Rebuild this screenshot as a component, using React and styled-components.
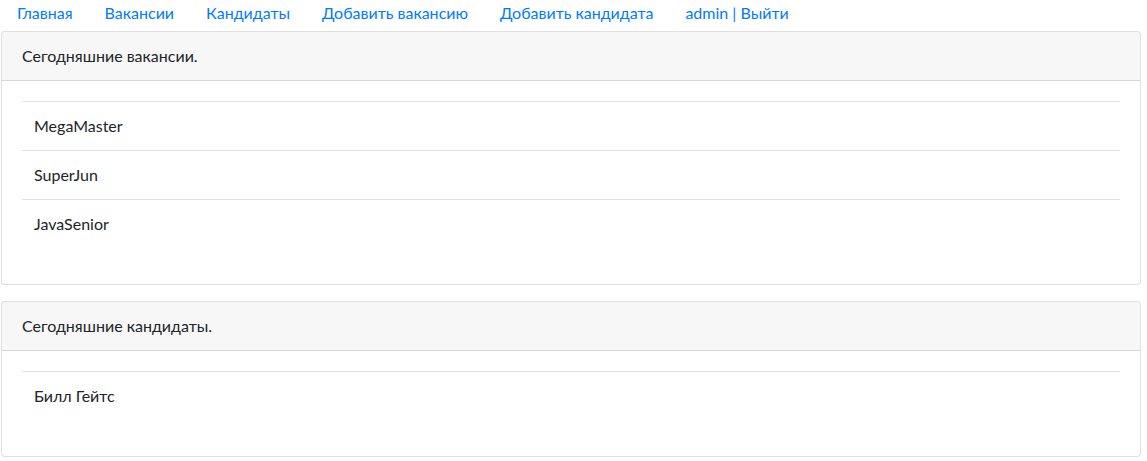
import React from "react";
import styled, { createGlobalStyle } from "styled-components";

const Global = createGlobalStyle`
  * { box-sizing: border-box; }
  body {
    margin: 0;
    background: #fff;
    font-family: Lato, "Noto Sans", sans-serif;
    font-size: 16px;
    line-height: 24px;
    color: #212529;
  }
`;

const Page = styled.div`
  width: 1140px;
  margin-left: 1px;
`;

const Nav = styled.nav`
  display: flex;
  height: 31px;
  align-items: flex-start;
  padding-top: 1px;
`;

const NavLink = styled.a`
  color: #007bff;
  text-decoration: none;
  padding: 0 16px;
  line-height: 24px;
`;

const Card = styled.section`
  border: 1px solid rgba(0, 0, 0, 0.125);
  border-radius: 4px;
  background: #fff;
  margin-bottom: 16px;
  overflow: hidden;
`;

const CardHeader = styled.div`
  padding: 12px 20px;
  background: rgba(0, 0, 0, 0.03);
  border-bottom: 1px solid rgba(0, 0, 0, 0.125);
`;

const CardBody = styled.div`
  padding: 20px;
`;

const Table = styled.table`
  width: 100%;
  border-collapse: collapse;
  margin-bottom: 16px;
`;

const Cell = styled.td`
  padding: 12px;
  border-top: 1px solid #dee2e6;
  vertical-align: top;
`;

const links = [
  "Главная",
  "Вакансии",
  "Кандидаты",
  "Добавить вакансию",
  "Добавить кандидата",
  "admin | Выйти",
];

const sections = [
  { title: "Сегодняшние вакансии.", items: ["MegaMaster", "SuperJun", "JavaSenior"] },
  { title: "Сегодняшние кандидаты.", items: ["Билл Гейтс"] },
];

export default function App() {
  return (
    <>
      <Global />
      <Page>
        <Nav>
          {links.map((l) => (
            <NavLink key={l} href="#">{l}</NavLink>
          ))}
        </Nav>
        {sections.map((s) => (
          <Card key={s.title}>
            <CardHeader>{s.title}</CardHeader>
            <CardBody>
              <Table>
                <tbody>
                  {s.items.map((i) => (
                    <tr key={i}>
                      <Cell>{i}</Cell>
                    </tr>
                  ))}
                </tbody>
              </Table>
            </CardBody>
          </Card>
        ))}
      </Page>
    </>
  );
}
